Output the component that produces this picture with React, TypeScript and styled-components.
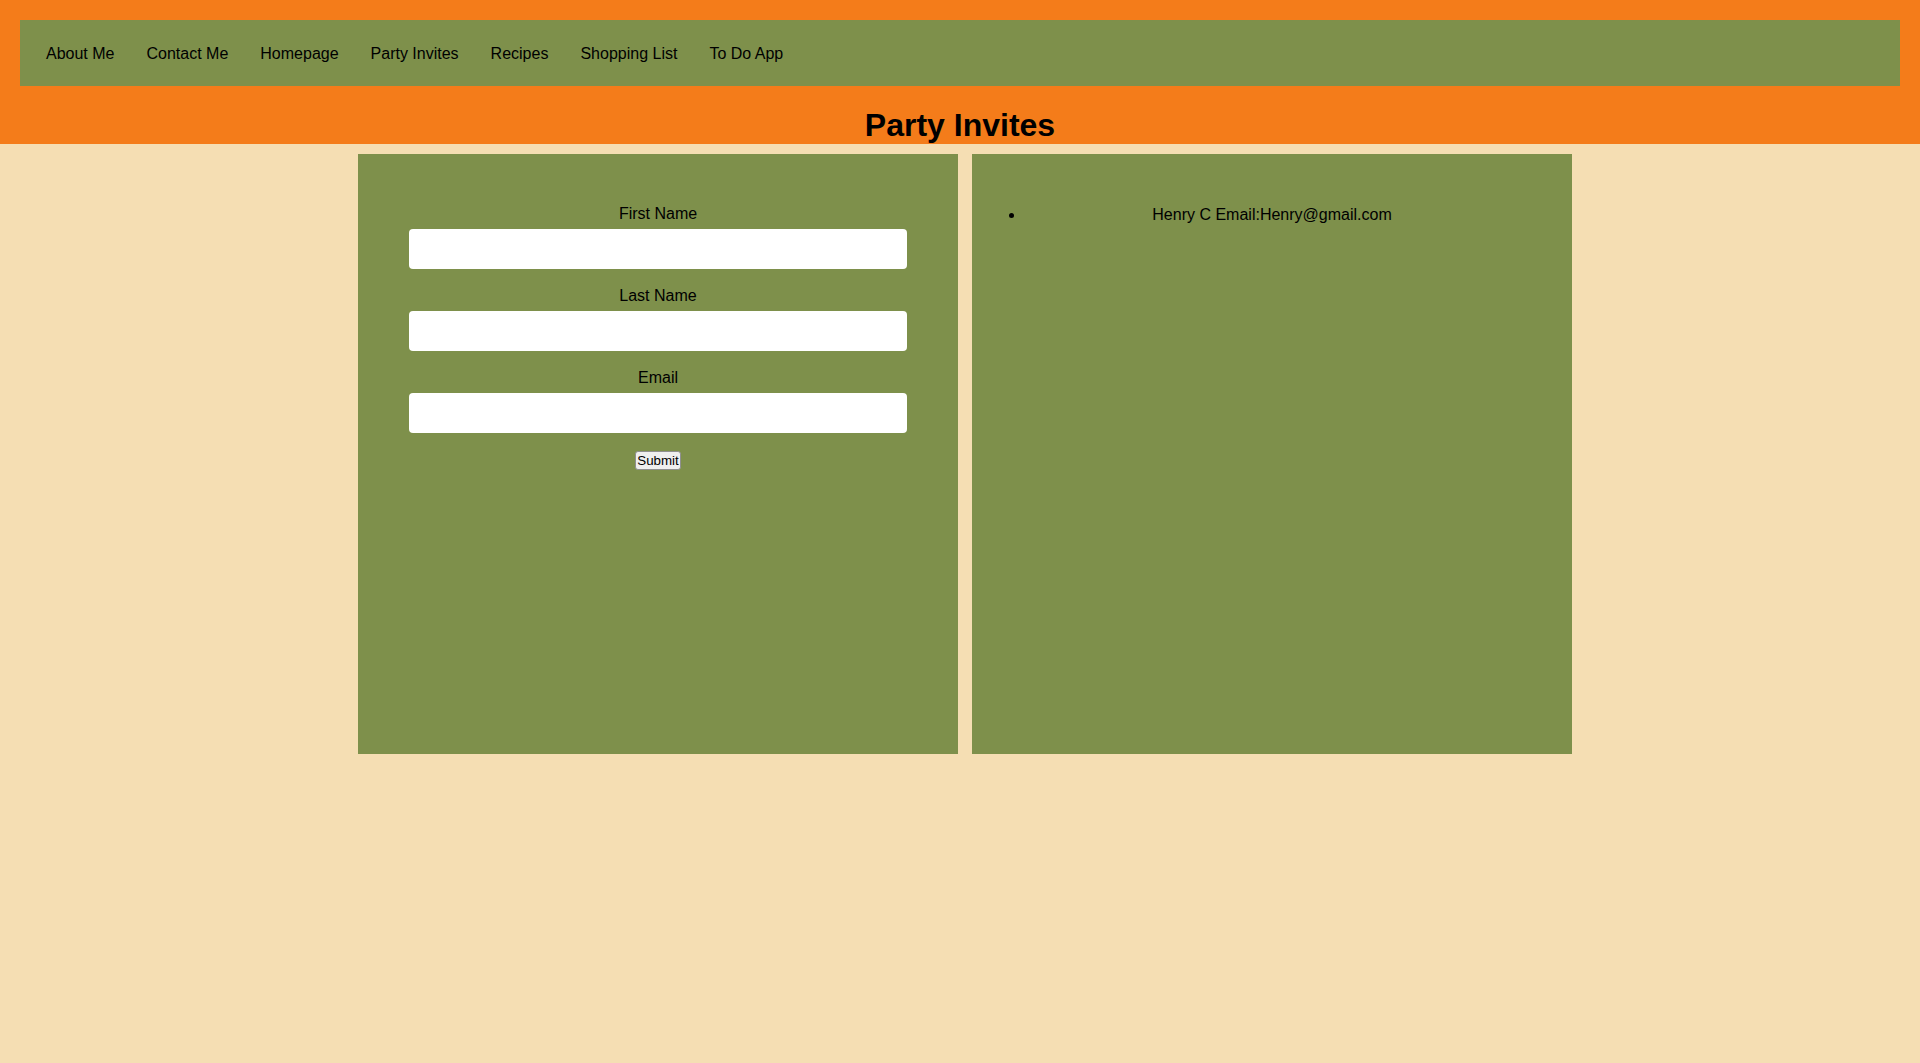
import React from "react";
import styled, { createGlobalStyle } from "styled-components";

const GlobalStyle = createGlobalStyle`
  html, body {
    margin: 0;
    padding: 0;
    background: #f5deb3;
    font-family: "Liberation Sans", Arial, sans-serif;
    color: #000;
  }
`;

const Header = styled.header`
  background: #f47c1a;
  padding: 20px 20px 0;
`;

const Nav = styled.nav`
  background: #7e904b;
  height: 66px;
  box-sizing: border-box;
  display: flex;
  align-items: center;
  padding: 2px 0 0 10px;
`;

const NavLink = styled.a`
  padding: 0 16px;
  font-size: 16px;
  line-height: 18px;
  color: #000;
  text-decoration: none;
`;

const Title = styled.h1`
  margin: 21px 0 0;
  font-size: 32px;
  line-height: 37px;
  font-weight: bold;
  text-align: center;
`;

const Main = styled.main`
  display: flex;
  justify-content: center;
  gap: 14px;
  padding: 10px 0 0 10px;
`;

const Panel = styled.section<{ $top: number }>`
  width: 600px;
  height: 600px;
  box-sizing: border-box;
  background: #7e904b;
  padding-top: ${(p) => p.$top}px;
`;

const Form = styled.form`
  display: flex;
  flex-direction: column;
  align-items: center;
`;

const Label = styled.label`
  font-size: 16px;
  line-height: 18px;
  margin-bottom: 6px;
`;

const Input = styled.input`
  width: 498px;
  height: 40px;
  box-sizing: border-box;
  border: none;
  border-radius: 4px;
  background: #fff;
  margin: 0 0 18px;
  padding: 0 8px;
  font-family: inherit;
  font-size: 16px;
`;

const SubmitButton = styled.button`
  font-family: "Liberation Sans", Arial, sans-serif;
  font-size: 13.33px;
  height: 19px;
  padding: 0 1px;
  line-height: 15px;
  border: 1px solid #8f8f8f;
  border-radius: 3px;
  background: #efefef;
  color: #000;
`;

const List = styled.ul`
  margin: 0;
  padding: 0 53px;
`;

const Item = styled.li`
  font-size: 16px;
  line-height: 18px;
  text-align: center;
`;

const links = [
  "About Me",
  "Contact Me",
  "Homepage",
  "Party Invites",
  "Recipes",
  "Shopping List",
  "To Do App",
];

export default function App() {
  return (
    <>
      <GlobalStyle />
      <Header>
        <Nav>
          {links.map((l) => (
            <NavLink key={l} href="#">
              {l}
            </NavLink>
          ))}
        </Nav>
        <Title>Party Invites</Title>
      </Header>
      <Main>
        <Panel $top={51}>
          <Form onSubmit={(e) => e.preventDefault()}>
            <Label htmlFor="first">First Name</Label>
            <Input id="first" type="text" />
            <Label htmlFor="last">Last Name</Label>
            <Input id="last" type="text" />
            <Label htmlFor="email">Email</Label>
            <Input id="email" type="email" />
            <SubmitButton type="submit">Submit</SubmitButton>
          </Form>
        </Panel>
        <Panel $top={52}>
          <List>
            <Item>Henry C Email:Henry@gmail.com</Item>
          </List>
        </Panel>
      </Main>
    </>
  );
}
